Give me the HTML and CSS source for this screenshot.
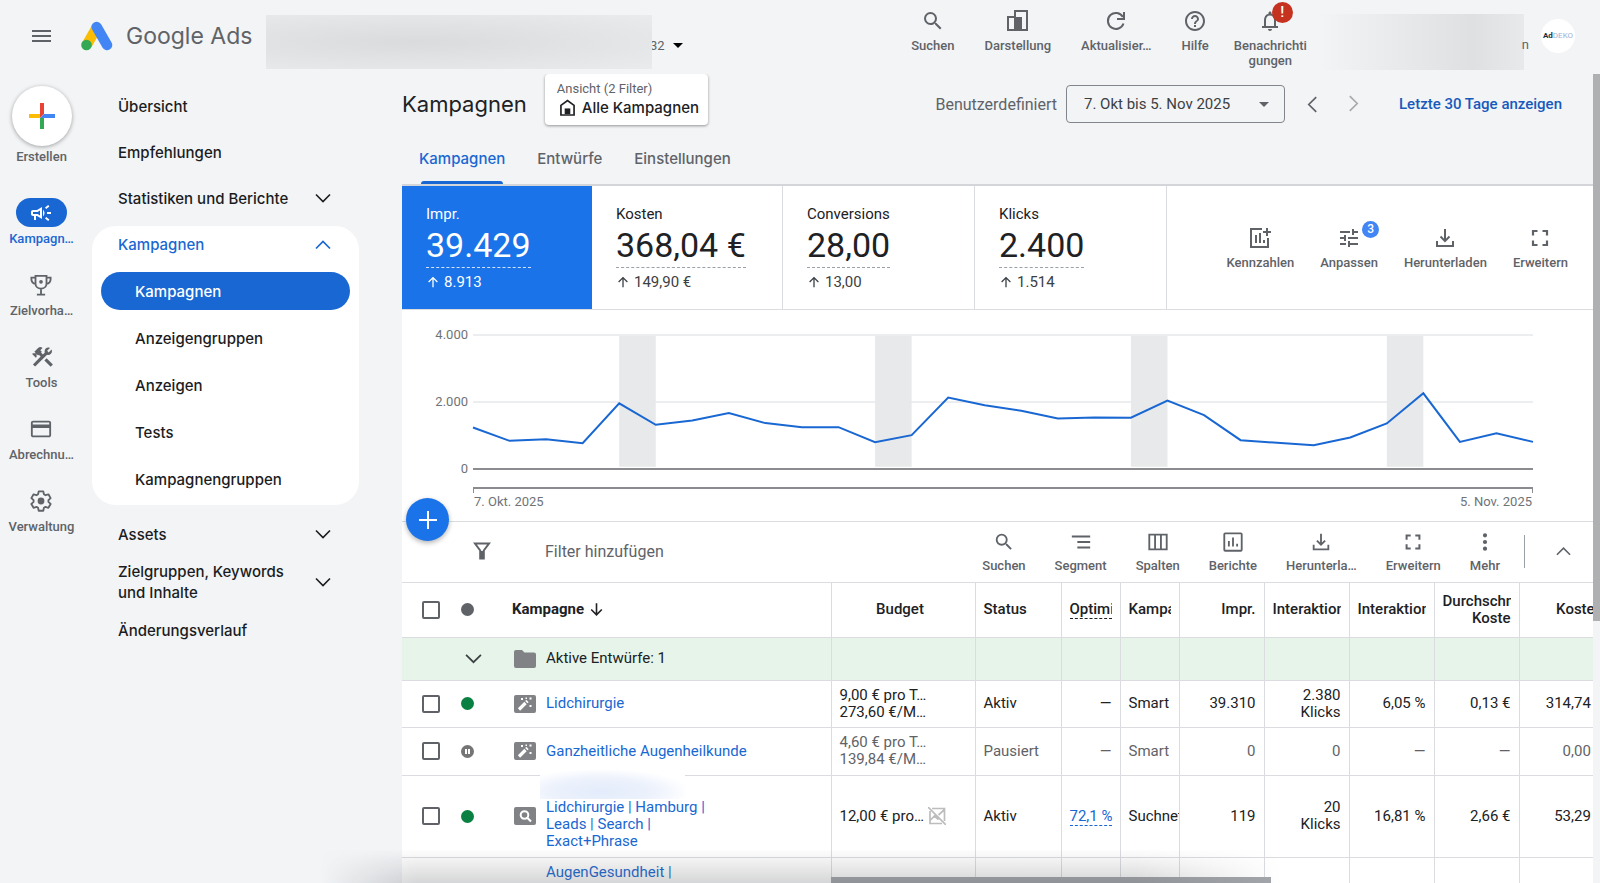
FILE: index.html
```html
<!DOCTYPE html>
<html lang="de">
<head>
<meta charset="utf-8">
<title>Kampagnen – Google Ads</title>
<link rel="stylesheet" href="styles.css">
</head>
<body>
<svg class="sprite" aria-hidden="true">
  <symbol id="search" viewBox="0 0 24 24"><path fill="currentColor" d="M15.5 14h-.79l-.28-.27A6.471 6.471 0 0 0 16 9.5 6.5 6.5 0 1 0 9.5 16c1.61 0 3.09-.59 4.23-1.57l.27.28v.79l5 4.99L20.49 19l-4.99-5zm-6 0C7.01 14 5 11.99 5 9.5S7.01 5 9.5 5 14 7.01 14 9.5 11.99 14 9.5 14z"/></symbol>
  <symbol id="layout" viewBox="0 0 24 24"><path fill="none" stroke="currentColor" stroke-width="2" d="M9 8V2h12v19H2V8h7v13"/><path fill="currentColor" d="M8 8h8v13H8z"/></symbol>
  <symbol id="refresh" viewBox="0 0 24 24"><path fill="none" stroke="currentColor" stroke-width="2" d="M19.5 14.5a8 8 0 1 1-.6-6.5M20 3v7h-7"/></symbol>
  <symbol id="help" viewBox="0 0 24 24"><path fill="currentColor" d="M11 18h2v-2h-2v2zm1-16C6.48 2 2 6.48 2 12s4.48 10 10 10 10-4.48 10-10S17.52 2 12 2zm0 18c-4.41 0-8-3.59-8-8s3.59-8 8-8 8 3.59 8 8-3.59 8-8 8zm0-14c-2.21 0-4 1.79-4 4h2c0-1.1.9-2 2-2s2 .9 2 2c0 2-3 1.75-3 5h2c0-2.25 3-2.5 3-5 0-2.21-1.79-4-4-4z"/></symbol>
  <symbol id="bell" viewBox="0 0 24 24"><path fill="currentColor" d="M12 22c1.1 0 2-.9 2-2h-4c0 1.1.89 2 2 2zm6-5v-6c0-3.07-1.64-5.64-4.5-6.32V4c0-.83-.67-1.5-1.5-1.5s-1.5.67-1.5 1.5v.68C7.63 5.36 6 7.92 6 11v6H4v2h16v-2zm-2 0H8v-6c0-2.48 1.51-4.5 4-4.5s4 2.02 4 4.5v6z"/></symbol>
  <symbol id="download" viewBox="0 0 24 24"><path fill="none" stroke="currentColor" stroke-width="2" d="M12 3v12M7.500 10.500L12 15l4.500-4.500M4 15v5h16v-5"/></symbol>
  <symbol id="expand" viewBox="0 0 24 24"><path fill="none" stroke="currentColor" stroke-width="2.200" d="M5 9.500V5h4.500M14.500 5H19v4.500M19 14.500V19h-4.500M9.500 19H5v-4.500"/></symbol>
  <symbol id="tune" viewBox="0 0 24 24"><path fill="currentColor" d="M3 17v2h6v-2H3zM3 5v2h10V5H3zm10 16v-2h8v-2h-8v-2h-2v6h2zM7 9v2H3v2h4v2h2V9H7zm14 4v-2H11v2h10zm-6-4h2V7h4V5h-4V3h-2v6z"/></symbol>
  <symbol id="metric" viewBox="0 0 24 24"><path fill="none" stroke="currentColor" stroke-width="2" d="M14 3H3v18h17v-9M8 9v8M12 7v10M16 14v3M19 2v8M15 6h8"/></symbol>
  <symbol id="report" viewBox="0 0 24 24"><rect x="2.500" y="2.500" width="19" height="19" rx="1" fill="none" stroke="currentColor" stroke-width="2"/><path fill="none" stroke="currentColor" stroke-width="2" d="M7.500 11v6M12 7v10M16.500 14v3"/></symbol>
  <symbol id="segment" viewBox="0 0 24 24"><path fill="none" stroke="currentColor" stroke-width="2" d="M2 6h20M8 12h14M8 18h14"/></symbol>
  <symbol id="columns" viewBox="0 0 24 24"><path fill="none" stroke="currentColor" stroke-width="2" d="M2.500 4h19v16h-19zM8.800 4v16M15.200 4v16"/></symbol>
  <symbol id="more" viewBox="0 0 24 24"><path fill="currentColor" d="M12 7a2.300 2.300 0 1 0 0-4.600A2.300 2.300 0 0 0 12 7zm0 2.700a2.300 2.300 0 1 0 0 4.600 2.300 2.300 0 0 0 0-4.600zM12 17a2.300 2.300 0 1 0 0 4.600 2.300 2.300 0 0 0 0-4.600z"/></symbol>
  <symbol id="down" viewBox="0 0 16 16"><path fill="none" stroke="currentColor" stroke-width="1.600" d="M1 4.500l7 7 7-7"/></symbol>
  <symbol id="up" viewBox="0 0 16 16"><path fill="none" stroke="currentColor" stroke-width="1.700" d="M1 11.500l7-7 7 7"/></symbol>
  <symbol id="arrow-up" viewBox="0 0 16 16"><path fill="none" stroke="currentColor" stroke-width="1.500" d="M8 14V3M3 8l5-5 5 5"/></symbol>
  <symbol id="campaign" viewBox="0 0 24 24"><path fill="currentColor" d="M18 11v2h4v-2h-4zm-2 6.610c.96.71 2.210 1.650 3.200 2.390.4-.53.8-1.070 1.200-1.600-.99-.74-2.240-1.680-3.200-2.400-.4.54-.8 1.080-1.200 1.610zM20.400 5.600c-.4-.53-.8-1.070-1.200-1.600-.99.74-2.240 1.680-3.200 2.400.4.53.8 1.070 1.200 1.600.96-.72 2.210-1.650 3.200-2.400zM4 9c-1.100 0-2 .9-2 2v2c0 1.100.9 2 2 2h1v4h2v-4h1l5 3V6L8 9H4zm5.030 1.710L11 9.530v4.940l-1.970-1.180-.48-.29H4v-2h4.550l.48-.29zM15.500 12c0-1.330-.58-2.530-1.500-3.350v6.690c.92-.81 1.500-2.010 1.500-3.340z"/></symbol>
  <symbol id="trophy" viewBox="0 0 24 24"><path fill="none" stroke="currentColor" stroke-width="2" d="M6 2h12v8.500c0 3-2.500 5.500-6 5.500s-6-2.500-6-5.500zM6 4H1.500v1.500c0 3 2 5 4.800 5.500M18 4h4.500v1.500c0 3-2 5-4.800 5.500M12 16v6M7.500 22.500h9"/><circle cx="12" cy="8.500" r="2" fill="currentColor"/></symbol>
  <symbol id="tools" viewBox="1 2 21 20"><path fill="currentColor" d="M13.780 15.300l6 6 2.110-2.160-6-6zM17.500 10c1.930 0 3.500-1.570 3.500-3.500 0-.58-.16-1.120-.41-1.600l-2.700 2.700-1.490-1.490 2.700-2.700C18.620 3.160 18.080 3 17.500 3 15.570 3 14 4.570 14 6.500c0 .41.08.8.21 1.160l-1.850 1.850-1.780-1.780.71-.71L9.870 5.610 12 3.490a3 3 0 0 0-4.240 0L4.220 7.030l1.410 1.410H2.810l-.71.71 3.540 3.540.71-.71V9.150l1.410 1.410.71-.71 1.780 1.780-7.410 7.410 2.120 2.120L16.340 9.790c.36.13.75.21 1.160.21z"/></symbol>
  <symbol id="card" viewBox="0 0 24 24"><path fill="currentColor" d="M20.500 3h-17C2 3 1 4 1 5.300v13.400C1 20 2 21 3.500 21h17c1.500 0 2.500-1 2.500-2.300V5.300C23 4 22 3 20.500 3zm.500 16H3v-8h18zm0-12H3V5h18z"/></symbol>
  <symbol id="gear" viewBox="0 0 24 24"><path fill="none" stroke="currentColor" stroke-width="2" stroke-linejoin="round" d="M9.500 1.500h5l.7 3.200 1.700 1 3.200-1 2.400 4.200-2.400 2.200v1.900l2.400 2.200-2.400 4.200-3.200-1-1.700 1-.7 3.200h-5l-.7-3.200-1.700-1-3.200 1-2.400-4.200 2.400-2.200v-1.900L1.500 8.900l2.400-4.200 3.200 1 1.700-1z"/><circle cx="12" cy="12" r="3.700" fill="currentColor"/></symbol>
  <symbol id="home" viewBox="0 0 16 18"><path fill="none" stroke="currentColor" stroke-width="1.800" d="M1 6.800L8 1.500l7 5.300V17H1z"/><path fill="currentColor" d="M5 10h6v6H5z"/></symbol>
  <symbol id="funnel" viewBox="0 0 18 18"><path fill="none" stroke="currentColor" stroke-width="2" d="M2 1.500h14L10.800 8.500V16.500H7.200V8.500z"/><path fill="currentColor" d="M7 9h4v8H7z"/></symbol>
  <symbol id="folder" viewBox="0 0 22 18"><path fill="#808285" d="M2 0h6l2.500 2.500H20a2 2 0 0 1 2 2V16a2 2 0 0 1-2 2H2a2 2 0 0 1-2-2V2a2 2 0 0 1 2-2z"/></symbol>
  <symbol id="wand" viewBox="0 0 22 18"><rect width="22" height="18" rx="2" fill="#808285"/><path stroke="#fff" stroke-width="3.200" d="M5 14.500l6.500-6.500"/><path stroke="#fff" stroke-width="3.200" d="M12.300 7.200l1.200-1.200"/><path fill="#fff" d="M7 3h2v2H7zM15.500 2.500h2v2h-2zM15.500 10h2v2h-2zM11.500 2.500h1.500V4h-1.500z"/></symbol>
  <symbol id="searchcard" viewBox="0 0 22 18"><rect width="22" height="18" rx="2" fill="#808285"/><circle cx="10.500" cy="8" r="3.800" fill="none" stroke="#fff" stroke-width="2"/><path stroke="#fff" stroke-width="2.200" d="M13 10.500l4 4"/></symbol>
  <symbol id="nochart" viewBox="0 0 18 18"><path fill="none" stroke="#bdbdbd" stroke-width="1.700" d="M4 1.500h12.500V14M2 4v12.500h12M0 0l18 18M2.500 13l4-4 4 3.500M10.500 8l5.500-5"/></symbol>
</svg>

<div class="app">
  <header class="topbar">
    <button class="menu" aria-label="Hauptmenü"><i></i><i></i><i></i></button>
    <a class="brand" href="#">
      <svg width="32" height="30" viewBox="0 0 32 30"><path d="M6 23.500L15.700 6.500" stroke="#fbbc04" stroke-width="10.500"/><path d="M15.700 6L26 24" stroke="#4285f4" stroke-width="10.500" stroke-linecap="round"/><circle cx="5.500" cy="24" r="5.300" fill="#34a853"/></svg>
      <span>Google Ads</span>
    </a>
    <button class="account" aria-label="Konto wechseln"><span class="redacted wide"></span><span class="account-id">32</span><span class="caret"></span></button>
    <nav class="top-tools">
      <button class="tool"><svg><use href="#search"/></svg>Suchen</button>
      <button class="tool"><svg><use href="#layout"/></svg>Darstellung</button>
      <button class="tool"><svg><use href="#refresh"/></svg>Aktualisier…</button>
      <button class="tool"><svg><use href="#help"/></svg>Hilfe</button>
      <button class="tool two-line"><svg><use href="#bell"/></svg><b class="alert">!</b>Benachrichti<br>gungen</button>
    </nav>
    <div class="user"><span class="redacted small"></span><span class="user-id">n</span></div>
    <a class="avatar" href="#" aria-label="Konto"><b>Ad</b><span>DEKO</span></a>
  </header>

  <nav class="rail">
    <button class="create"><span class="create-disc"><svg width="26" height="26" viewBox="0 0 26 26"><path fill="#ea4335" d="M11 0h4v11l-4 4z"/><path fill="#4285f4" d="M15 11h11v4H11z"/><path fill="#34a853" d="M11 15h4v11h-4z"/><path fill="#fbbc04" d="M0 11h11v4H0z"/></svg></span>Erstellen</button>
    <a class="rail-item active" href="#"><span><svg><use href="#campaign"/></svg></span>Kampagn…</a>
    <a class="rail-item" href="#"><span><svg><use href="#trophy"/></svg></span>Zielvorha…</a>
    <a class="rail-item" href="#"><span><svg><use href="#tools"/></svg></span>Tools</a>
    <a class="rail-item" href="#"><span><svg><use href="#card"/></svg></span>Abrechnu…</a>
    <a class="rail-item" href="#"><span><svg><use href="#gear"/></svg></span>Verwaltung</a>
  </nav>

  <nav class="sidenav">
    <a href="#">Übersicht</a>
    <a href="#">Empfehlungen</a>
    <a href="#">Statistiken und Berichte<svg><use href="#down"/></svg></a>
    <div class="group">
      <a class="head" href="#">Kampagnen<svg><use href="#up"/></svg></a>
      <a class="sub current" href="#">Kampagnen</a>
      <a class="sub" href="#">Anzeigengruppen</a>
      <a class="sub" href="#">Anzeigen</a>
      <a class="sub" href="#">Tests</a>
      <a class="sub" href="#">Kampagnengruppen</a>
    </div>
    <a href="#">Assets<svg><use href="#down"/></svg></a>
    <a class="tall" href="#"><span>Zielgruppen, Keywords<br>und Inhalte</span><svg><use href="#down"/></svg></a>
    <a href="#">Änderungsverlauf</a>
  </nav>

  <main class="main">
    <div class="title-row">
      <h1>Kampagnen</h1>
      <button class="view"><small>Ansicht (2 Filter)</small><span><svg><use href="#home"/></svg>Alle Kampagnen</span></button>
      <div class="dates">
        <span class="range-label">Benutzerdefiniert</span>
        <button class="range">7. Okt bis 5. Nov 2025<span class="caret"></span></button>
        <button class="step prev" aria-label="Zurück"><svg><use href="#down"/></svg></button>
        <button class="step next" aria-label="Weiter" disabled><svg><use href="#down"/></svg></button>
        <a class="last" href="#">Letzte 30 Tage anzeigen</a>
      </div>
    </div>
    <div class="tabs">
      <a class="on" href="#">Kampagnen</a><a href="#">Entwürfe</a><a href="#">Einstellungen</a>
    </div>
    <section class="cards">
      <button class="score blue"><span>Impr.</span><strong>39.429</strong><em><svg><use href="#arrow-up"/></svg>8.913</em></button>
      <button class="score"><span>Kosten</span><strong>368,04 €</strong><em><svg><use href="#arrow-up"/></svg>149,90 €</em></button>
      <button class="score"><span>Conversions</span><strong>28,00</strong><em><svg><use href="#arrow-up"/></svg>13,00</em></button>
      <button class="score"><span>Klicks</span><strong>2.400</strong><em><svg><use href="#arrow-up"/></svg>1.514</em></button>
      <div class="card-tools">
        <button class="tool"><svg><use href="#metric"/></svg>Kennzahlen</button>
        <button class="tool"><svg><use href="#tune"/></svg><b class="count">3</b>Anpassen</button>
        <button class="tool"><svg><use href="#download"/></svg>Herunterladen</button>
        <button class="tool"><svg><use href="#expand"/></svg>Erweitern</button>
      </div>
    </section>
    <section class="chart">
      <div class="y-axis"><span>4.000</span><span>2.000</span><span>0</span></div>
      <svg class="plot" viewBox="0 0 29 400" preserveAspectRatio="none">
        <g stroke="#dadce0" stroke-width="1"><path vector-effect="non-scaling-stroke" d="M0 0H29"/><path vector-effect="non-scaling-stroke" d="M0 200H29"/></g>
        <path fill="#e8e9ea" d="M4 3h1v390h-1zM11 3h1v390h-1zM18 3h1v390h-1zM25 3h1v390h-1z"/>
        <path vector-effect="non-scaling-stroke" stroke="#8a8c8f" stroke-width="2" d="M0 400H29"/>
        <polyline vector-effect="non-scaling-stroke" fill="none" stroke="#1967d2" stroke-width="2" points="0,276 1,316 2,311 3,323 4,204 5,268 6,255 7,233 8,263 9,275 10,275 11,320 12,299 13,187 14,210 15,226 16,249 17,246 18,247 19,196 20,239 21,314 22,322 23,329 24,306 25,264 26,174 27,319 28,293 29,319"/>
      </svg>
      <div class="x-axis"><span>7. Okt. 2025</span><span>5. Nov. 2025</span></div>
    </section>
    <section class="filterbar">
      <button class="fab" aria-label="Neue Kampagne"><svg width="18" height="18" viewBox="0 0 18 18"><path stroke="#fff" stroke-width="2" d="M9 0v18M0 9h18"/></svg></button>
      <svg class="funnel"><use href="#funnel"/></svg>
      <input type="text" placeholder="Filter hinzufügen" aria-label="Filter hinzufügen">
      <div class="bar-tools">
        <button class="tool"><svg><use href="#search"/></svg>Suchen</button>
        <button class="tool"><svg><use href="#segment"/></svg>Segment</button>
        <button class="tool"><svg><use href="#columns"/></svg>Spalten</button>
        <button class="tool"><svg><use href="#report"/></svg>Berichte</button>
        <button class="tool"><svg><use href="#download"/></svg>Herunterla…</button>
        <button class="tool"><svg><use href="#expand"/></svg>Erweitern</button>
        <button class="tool"><svg><use href="#more"/></svg>Mehr</button>
      </div>
      <button class="collapse" aria-label="Diagramm ausblenden"><svg><use href="#up"/></svg></button>
    </section>
    <div class="table-wrap">
      <table>
        <colgroup><col class="c-check"><col class="c-dot"><col><col class="c-budget"><col class="c-status"><col class="c-narrow"><col class="c-narrow"><col class="c-num"><col class="c-num"><col class="c-num"><col class="c-num"><col class="c-last"></colgroup>
        <thead>
          <tr><th><input type="checkbox" aria-label="Alle auswählen"></th><th class="plain"><span class="dot grey"></span></th><th class="name">Kampagne<svg class="sort"><use href="#arrow-up"/></svg></th><th class="mid">Budget</th><th>Status</th><th><span class="clip dotted">Optimi</span></th><th><span class="clip">Kampa</span></th><th class="num">Impr.</th><th class="num"><span class="clip">Interaktion</span></th><th class="num"><span class="clip">Interaktion</span></th><th class="num"><span class="clip">Durchschn</span><span class="clip">Koste</span></th><th class="num">Kosten</th></tr>
        </thead>
        <tbody>
          <tr class="drafts"><td></td><td class="plain"><svg class="chev"><use href="#down"/></svg></td><td class="camp"><div><svg><use href="#folder"/></svg><span>Aktive Entwürfe: 1</span></div></td><td></td><td></td><td></td><td></td><td></td><td></td><td></td><td></td><td></td></tr>
          <tr><td><input type="checkbox" aria-label="Lidchirurgie"></td><td class="plain"><span class="dot"></span></td><td class="camp"><div><svg><use href="#wand"/></svg><a href="#">Lidchirurgie</a></div></td><td>9,00 € pro T…<br>273,60 €/M…</td><td>Aktiv</td><td class="num">—</td><td>Smart</td><td class="num">39.310</td><td class="num">2.380<br>Klicks</td><td class="num">6,05 %</td><td class="num">0,13 €</td><td class="num">314,74 €</td></tr>
          <tr class="paused"><td><input type="checkbox" aria-label="Ganzheitliche Augenheilkunde"></td><td class="plain"><span class="dot pause"></span></td><td class="camp"><div><svg><use href="#wand"/></svg><a href="#">Ganzheitliche Augenheilkunde</a></div></td><td>4,60 € pro T…<br>139,84 €/M…</td><td>Pausiert</td><td class="num">—</td><td>Smart</td><td class="num">0</td><td class="num">0</td><td class="num">—</td><td class="num">—</td><td class="num">0,00 €</td></tr>
          <tr class="big"><td><input type="checkbox" aria-label="Lidchirurgie Hamburg"></td><td class="plain"><span class="dot"></span></td><td class="camp"><div><svg><use href="#searchcard"/></svg><a class="hidden-line" href="#">Lidchirurgie | Hamburg |<br>Leads | Search |<br>Exact+Phrase</a></div></td><td><span class="budget">12,00 € pro…<svg><use href="#nochart"/></svg></span></td><td>Aktiv</td><td class="num"><a class="dotted" href="#">72,1 %</a></td><td class="cut">Suchnetz</td><td class="num">119</td><td class="num">20<br>Klicks</td><td class="num">16,81 %</td><td class="num">2,66 €</td><td class="num">53,29 €</td></tr>
          <tr class="partial"><td></td><td class="plain"></td><td class="camp"><div><i></i><a href="#">AugenGesundheit |</a></div></td><td></td><td></td><td></td><td></td><td></td><td></td><td></td><td></td><td></td></tr>
        </tbody>
      </table>
      <div class="h-scroll"></div>
    </div>
  </main>
  <div class="v-scroll"></div>
  <div class="shade"></div>
</div>
</body>
</html>
```
FILE: styles.css
```css
:root {
  --blue: #1967d2;
  --ink: #202124;
  --grey: #5f6368;
  --line: #dadce0;
  --bg: #f2f4f6;
  --display: Inter, "Open Sans", sans-serif;
}
* { box-sizing: border-box; }
body {
  margin: 0;
  background: var(--bg);
  color: var(--ink);
  font-family: Roboto, "Liberation Sans", sans-serif;
  font-size: 15px;
}
button { border: 0; padding: 0; background: none; color: inherit; font: inherit; }
a { color: inherit; text-decoration: none; }
.sprite { position: absolute; width: 0; height: 0; }

.app {
  display: grid;
  grid-template-columns: 83px 319px minmax(0, 1fr) 7px;
  grid-template-rows: 74px minmax(0, 1fr);
  height: 100vh;
  overflow: hidden;
  position: relative;
}

/* top bar */
.topbar { grid-column: 1 / -1; display: flex; align-items: center; padding: 0 25px 3px 32px; }
.menu { display: grid; gap: 3px; width: 19px; margin-right: 30px; }
.menu i { height: 2px; background: var(--grey); }
.brand { display: flex; align-items: center; gap: 13px; width: 185px; font: 400 23px var(--display); color: var(--grey); white-space: nowrap; }
.account { display: flex; align-items: center; font-size: 13px; color: var(--grey); align-self: stretch; }
.account-id { margin: 20px 8px 0 -2px; }
.wide { position: relative; z-index: 1; }
.account .caret { margin-top: 20px; color: #000; }
.caret { border: 5px solid transparent; border-top-color: currentColor; border-bottom: 0; }
.redacted { align-self: flex-start; }
.wide { width: 386px; height: 54px; margin-top: 15px; background: radial-gradient(ellipse at 38% 50%, #dadbdc 0, #e2e3e4 50%, #eaebec 100%); }
.top-tools { display: flex; align-items: flex-start; gap: 30px; margin-left: auto; align-self: flex-start; padding-top: 9px; }
.tool {
  display: flex; flex-direction: column; align-items: center;
  position: relative;
  font-size: 13px; font-weight: 500; line-height: 15px; color: var(--grey);
  white-space: nowrap;
}
.tool svg { width: 24px; height: 24px; margin-bottom: 5px; }
.two-line { display: block; text-align: center; margin-left: -5px; }
.two-line svg { display: block; margin: 0 auto 5px; }
.alert, .count {
  position: absolute; display: grid; place-items: center;
  border-radius: 50%; color: #fff; font-weight: 500;
}
.alert { width: 21px; height: 21px; left: 38px; top: -7px; background: #c5321f; font-size: 15px; }
.user { display: flex; align-self: stretch; align-items: center; margin-left: 13px; font-size: 13px; color: var(--grey); }
.small { width: 204px; height: 56px; margin-top: 14px; background: linear-gradient(90deg, var(--bg), #e8e9ea 40%, #dfe0e1 75%, #e8e9ea); }
.user-id { margin-top: 18px; margin-left: -2px; }
.avatar {
  display: flex; align-items: center; justify-content: center;
  width: 34px; height: 34px; border-radius: 50%; margin-left: 12px;
  background: #fff; font-size: 8px; color: #9db2d6;
}
.avatar b { color: #222b3a; }

/* left rail */
.rail { display: flex; flex-direction: column; align-items: center; padding-top: 12px; color: var(--grey); font-size: 13px; font-weight: 500; }
.create { display: grid; justify-items: center; gap: 3px; line-height: 15px; margin-bottom: 34px; }
.create-disc { display: grid; place-items: center; width: 60px; height: 60px; border-radius: 50%; background: #fff; box-shadow: 0 1px 4px rgba(0, 0, 0, .35); }
.rail-item { display: flex; flex-direction: column; align-items: center; height: 72px; line-height: 15px; gap: 4px; }
.rail-item span { display: grid; place-items: center; width: 51px; height: 29px; border-radius: 15px; }
.rail-item svg { width: 22px; height: 22px; }
.rail-item.active { color: var(--blue); }
.active span { background: var(--blue); color: #fff; }
.rail-item.active svg { width: 24px; height: 24px; }

/* section navigation */
.sidenav { display: flex; flex-direction: column; padding: 9px 43px 0 9px; font: 500 15px/21px var(--display); color: #1b1c1e; }
.sidenav a { display: flex; align-items: center; justify-content: space-between; height: 46px; padding: 0 28px 0 26px; white-space: nowrap; }
.sidenav svg { width: 16px; height: 16px; flex: none; }
.group { background: #fff; border-radius: 24px; padding: 0 9px 7px; margin: 5px 0 6px; }
.group .head { height: 37px; margin-bottom: 9px; padding: 0 19px 0 17px; color: var(--blue); }
.group .sub { height: 38px; margin-bottom: 9px; padding-left: 34px; border-radius: 19px; }
.group .sub:last-child { margin-bottom: 0; }
.group .current { background: var(--blue); color: #fff; }
.sidenav .tall { height: 50px; }

/* heading */
.main { display: flex; flex-direction: column; min-width: 0; overflow: hidden; }
.title-row { display: flex; align-items: flex-start; }
h1 { margin: 0; font: 400 22px/60px var(--display); }
.view { margin-left: 18px; height: 51px; padding: 5px 9px 7px 12px; border-radius: 4px; background: #fff; box-shadow: 0 1px 3px rgba(0, 0, 0, .4); text-align: left; }
.view small { display: block; font-size: 13px; line-height: 18px; color: var(--grey); }
.view span { display: flex; align-items: center; gap: 7px; padding-left: 3px; font: 500 15px/20px var(--display); }
.view svg { width: 15px; height: 17px; }
.dates { display: flex; align-items: center; margin-left: auto; height: 60px; padding-right: 31px; color: var(--grey); font-size: 16px; }
.range { display: flex; align-items: center; justify-content: space-between; width: 219px; height: 38px; margin: 0 16px 0 9px; padding: 0 15px 0 17px; border: 1px solid #80868b; border-radius: 4px; color: #3c4043; font-size: 15px; }
.range .caret { color: var(--grey); }
.step { width: 20px; height: 20px; }
.step svg { width: 17px; height: 17px; }
.prev { transform: rotate(90deg); }
.next { transform: rotate(-90deg); margin: 0 34px 0 24px; opacity: .5; }
.last { color: #185abc; font-weight: 500; font-size: 15px; }

.tabs { display: flex; gap: 32px; height: 52px; padding: 0 17px; border-bottom: 2px solid #d3d5d8; font: 500 15px/50px var(--display); color: var(--grey); }
.tabs a { position: relative; height: 50px; }
.tabs .on { color: var(--blue); }
.tabs .on::after { content: ""; position: absolute; left: 2px; right: 2px; bottom: 0; height: 3px; border-radius: 3px 3px 0 0; background: var(--blue); }

/* score cards */
.cards { display: grid; grid-template-columns: 190px 191px 192px 192px 1fr; height: 124px; background: #fff; border-bottom: 1px solid var(--line); }
.score { display: flex; flex-direction: column; align-items: flex-start; padding: 18px 0 0 24px; border-right: 1px solid var(--line); text-align: left; }
.score span { line-height: 20px; }
.score strong { font-weight: 400; font-size: 34px; line-height: 43px; border-bottom: 1px dashed #9aa0a6; }
.score em { display: flex; align-items: center; gap: 4px; font-style: normal; line-height: 28px; color: #3c4043; }
.score svg { width: 14px; height: 14px; }
.blue { background: #1a73e8; border-color: #1a73e8; }
.score.blue, .blue em { color: #fff; }
.blue strong { border-color: #d2e3fc; }
.card-tools { display: flex; justify-content: flex-end; gap: 26px; padding: 40px 25px 0 0; }
.count { width: 17px; height: 17px; left: 42px; top: -5px; background: #4285f4; font-size: 12px; }
.cards .tool, .filterbar .tool { align-self: flex-start; }

/* chart */
.chart { display: grid; grid-template-columns: 71px minmax(0, 1fr); grid-template-rows: 134px 52px; padding: 25px 60px 0 0; background: #fff; border-bottom: 1px solid var(--line); font-size: 13px; color: #6f7377; }
.y-axis { display: flex; flex-direction: column; justify-content: space-between; margin: -8px 5px; line-height: 16px; text-align: right; }
.plot { width: 100%; height: 134px; overflow: visible; }
.x-axis { grid-column: 2; height: 6px; margin-top: 18px; border: 1px solid #8a8c8f; border-width: 2px 1px 0; display: flex; justify-content: space-between; line-height: 25px; }

/* filter bar */
.filterbar { display: flex; align-items: flex-start; height: 61px; flex: none; position: relative; background: #fff; border-bottom: 1px solid var(--line); }
.fab { position: absolute; left: 4px; top: -24px; width: 43px; height: 43px; display: grid; place-items: center; border-radius: 50%; background: #1a73e8; box-shadow: 0 2px 5px rgba(0, 0, 0, .3); }
.funnel { width: 18px; height: 18px; margin: 20px 54px 0 71px; color: var(--grey); }
.filterbar input { flex: 1; min-width: 0; height: 59px; border: 0; padding: 0; background: none; outline: 0; font: 400 16px Roboto, sans-serif; }
.filterbar input::placeholder { color: var(--grey); opacity: 1; }
.bar-tools { display: flex; gap: 29px; padding: 9px 24px 0 0; }
.bar-tools svg { width: 22px; height: 22px; }
.collapse { width: 69px; height: 33px; margin-top: 13px; padding-left: 8px; border-left: 1px solid #9aa0a6; display: grid; place-items: center; color: var(--grey); }
.collapse svg { width: 15px; height: 15px; }

/* campaign table */
.table-wrap { flex: 1; min-height: 0; overflow: hidden; position: relative; background: #fff; }
table { width: calc(100% + 18px); table-layout: fixed; border-collapse: collapse; line-height: 17px; }
.c-check { width: 50px; }
.c-dot { width: 45px; }
.c-budget { width: 144px; }
.c-status { width: 86px; }
.c-narrow { width: 59px; }
.c-num { width: 85px; }
.c-last { width: 92px; }
th, td { border-bottom: 1px solid var(--line); border-left: 1px solid var(--line); padding: 0 8px; text-align: left; font-weight: 400; overflow: hidden; white-space: nowrap; }
th { height: 54px; font-weight: 500; }
td { height: 47px; }
th:first-child, td:first-child { padding-left: 20px; border-left: 0; }
th.plain, td.plain, td.camp, th.name { border-left: 0; }
th.name { padding-left: 15px; font-weight: 700; }
.sort { width: 17px; height: 17px; margin-left: 4px; vertical-align: -4px; transform: rotate(180deg); }
th.mid { padding-right: 14px; text-align: center; }
th.num, td.num { text-align: right; }
.clip { display: block; overflow: hidden; }
.dotted { border-bottom: 1px dashed currentColor; }
td .dotted { color: var(--blue); }
td.cut { padding-right: 0; }
input[type="checkbox"] { appearance: none; display: block; width: 18px; height: 18px; margin: 0; border: 2px solid var(--grey); border-radius: 2px; }
.dot { display: block; width: 13px; height: 13px; margin-left: 1px; border-radius: 50%; background: #0b8043; }
.grey { background: var(--grey); }
.pause { background: linear-gradient(90deg, #757575 4px, #fff 4px 6px, #757575 6px 7px, #fff 7px 9px, #757575 9px) center / 13px 5px no-repeat, #757575; }
td.camp { padding-left: 17px; }
.camp div { display: flex; align-items: center; gap: 10px; }
.camp svg, .camp i { width: 22px; height: 18px; flex: none; }
.camp a { color: var(--blue); }
.drafts td { height: 43px; background: #e6f4ea; }
.chev { display: block; width: 17px; height: 17px; margin-left: 5px; color: #3c4043; }
.paused td { height: 48px; color: var(--grey); }
.big td { height: 82px; }
.big td.camp { overflow: visible; }
.hidden-line { position: relative; padding-top: 17px; }
.hidden-line::before { content: ""; position: absolute; left: -6px; top: -12px; width: 145px; height: 29px; background: radial-gradient(ellipse at 42% 75%, #e3ecfb 0, #edf2fc 45%, #fff 75%); }
.budget { display: flex; align-items: center; gap: 4px; }
.budget svg { width: 18px; height: 18px; }
.partial td { height: 80px; padding-top: 6px; vertical-align: top; }
.h-scroll { position: absolute; left: 36%; bottom: 0; width: 37%; height: 6px; background: #a3a6aa; }
.v-scroll { height: 547px; background: #aeb0b2; }
.shade { position: absolute; left: 20%; right: 20%; bottom: 0; height: 34px; background: linear-gradient(rgba(90, 92, 96, 0), rgba(90, 92, 96, .25)); mask-image: linear-gradient(90deg, transparent, #000 10% 85%, transparent); pointer-events: none; }
```
